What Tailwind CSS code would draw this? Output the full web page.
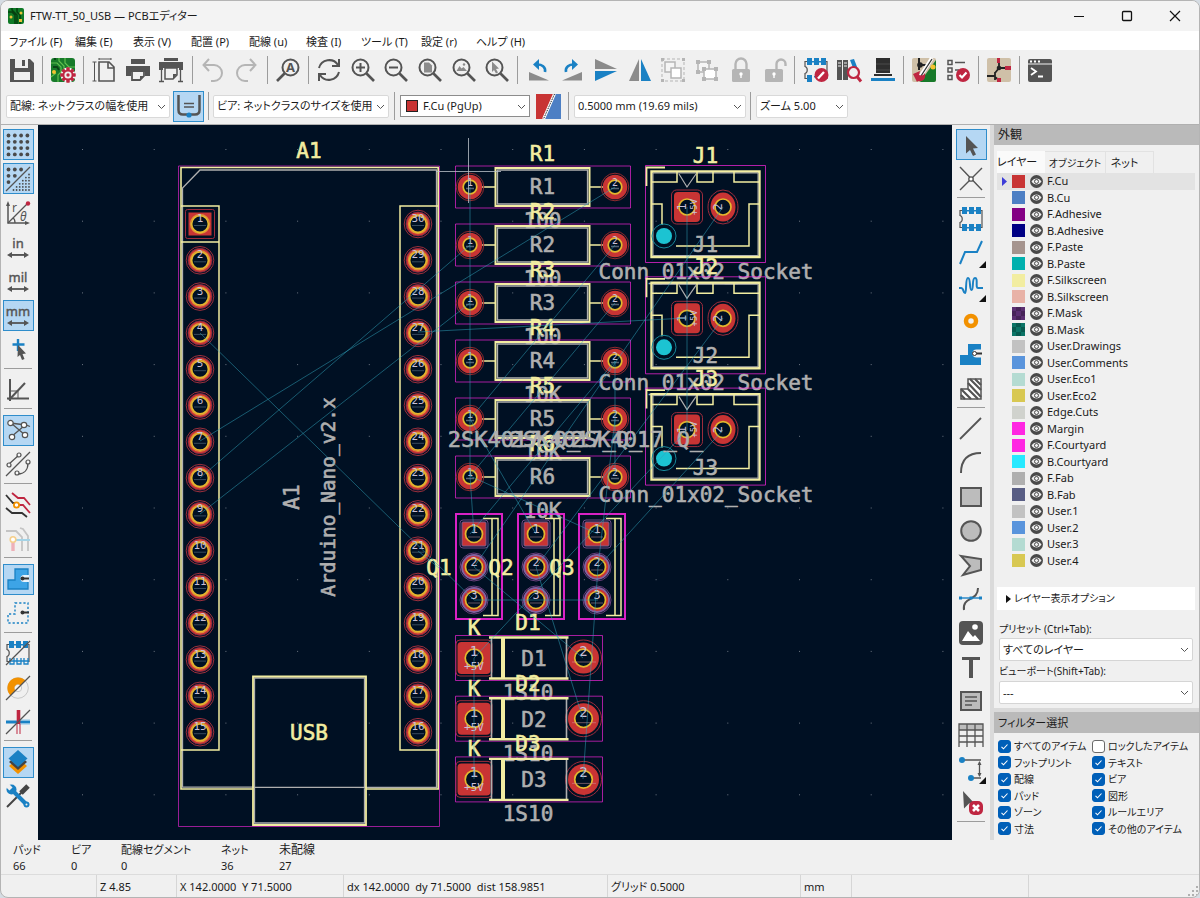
<!DOCTYPE html>
<html lang="ja">
  <head>
    <meta charset="UTF-8" />
    <meta name="viewport" content="width=device-width, initial-scale=1.0" />
    <title>FTW-TT_50_USB — PCBエディター</title>
    <script src="https://cdn.jsdelivr.net/npm/@tailwindcss/browser@4"></script>
  </head>
  <body class="bg-[#d5dce3]">
    <div
      class="flex flex-col h-screen overflow-hidden rounded-lg border border-[#b4b4b4] bg-[#f0f0f0] text-[12px] leading-4 text-[#1b1b1b] font-['Noto_Sans','Noto_Sans_CJK_JP',sans-serif] [font-feature-settings:'palt']"
    >
      <!-- title bar -->
      <header class="flex items-center h-[30px] shrink-0 bg-[#f3f3f3] pl-[7px]">
        <svg class="size-4" viewBox="0 0 16 16">
          <rect width="16" height="16" rx="2" fill="#0f7a26" />
          <path d="M0 4h4l3 3v9M4 0v2l5 5v9M9 0l0 4 3 3v9" fill="none" stroke="#05400f" stroke-width="1.5" />
          <circle cx="3" cy="9" r="1.5" fill="#e8c13a" />
          <circle cx="13" cy="5" r="1.5" fill="#e8c13a" />
          <rect x="11" y="11" width="3" height="3" fill="#e8c13a" />
        </svg>
        <h1 class="ml-[6px] text-[11px]">FTW-TT_50_USB — PCBエディター</h1>
        <div class="ml-auto flex">
          <button aria-label="最小化" class="grid place-items-center w-12 h-[30px]">
            <svg class="size-3" viewBox="0 0 12 12"><path d="M1 6.5h10" stroke="#111" /></svg>
          </button>
          <button aria-label="最大化" class="grid place-items-center w-12 h-[30px]">
            <svg class="size-3" viewBox="0 0 12 12"><rect x="1.5" y="1.5" width="9" height="9" rx="1" fill="none" stroke="#111" stroke-width="1.3" /></svg>
          </button>
          <button aria-label="閉じる" class="grid place-items-center w-12 h-[30px]">
            <svg class="size-3" viewBox="0 0 12 12"><path d="M1 1l10 10M11 1L1 11" stroke="#111" stroke-width="1.2" /></svg>
          </button>
        </div>
      </header>

      <!-- menu -->
      <nav class="grid grid-cols-[66px_58px_58px_58px_57px_55px_60px_55px_auto] items-center justify-start h-[19px] shrink-0 bg-white pl-2 pt-[2px] text-[11px]">
        <a href="#">ファイル (F)</a>
        <a href="#">編集 (E)</a>
        <a href="#">表示 (V)</a>
        <a href="#">配置 (P)</a>
        <a href="#">配線 (u)</a>
        <a href="#">検査 (I)</a>
        <a href="#">ツール (T)</a>
        <a href="#">設定 (r)</a>
        <a href="#">ヘルプ (H)</a>
      </nav>

      <!-- main toolbar -->
      <div class="h-10 shrink-0 pl-[5px]">
        <div id="topbar" class="flex items-center justify-between w-[1050px] h-10"></div>
      </div>

      <!-- track / via / layer / grid / zoom -->
      <div class="flex items-center h-[34px] shrink-0 pl-[5px] pb-[2px] text-[11px]">
        <div class="relative">
          <select aria-label="配線幅" class="appearance-none w-[164px] h-[23px] pl-[3px] bg-white border border-[#d9d9d9] rounded-[2px]">
            <option>配線: ネットクラスの幅を使用</option>
          </select>
          <svg class="absolute right-1 top-[7px] size-[9px] pointer-events-none" viewBox="0 0 9 9"><path d="M1 3l3.500 3.500L8 3" fill="none" stroke="#555" /></svg>
        </div>
        <button aria-label="既存配線の幅を使用" class="grid place-items-center size-[31px] ml-[3px] border border-[#2f8dcb] bg-[#b5d7f3]">
          <svg class="size-6" viewBox="0 0 24 24">
            <path d="M1.500 1v15c0 3 1.500 4.500 4.500 4.500h12c3 0 4.500-1.500 4.500-4.500V1" fill="none" stroke="#545454" stroke-width="2.500" />
            <path d="M7 9.500h10M7 13h10" stroke="#545454" stroke-width="1.300" />
            <circle cx="12" cy="21" r="2.600" fill="#1a81c4" />
          </svg>
        </button>
        <i class="w-px h-7 mx-1 bg-[#9c9c9c]"></i>
        <div class="relative">
          <select aria-label="ビアサイズ" class="appearance-none w-[176px] h-[23px] pl-[3px] bg-white border border-[#d9d9d9] rounded-[2px]">
            <option>ビア: ネットクラスのサイズを使用</option>
          </select>
          <svg class="absolute right-1 top-[7px] size-[9px] pointer-events-none" viewBox="0 0 9 9"><path d="M1 3l3.500 3.500L8 3" fill="none" stroke="#555" /></svg>
        </div>
        <i class="w-px h-7 mx-[5px] bg-[#9c9c9c]"></i>
        <div class="relative">
          <select aria-label="レイヤー" class="appearance-none w-[130px] h-[22px] pl-[22px] bg-white border border-[#8c8c8c]">
            <option>F.Cu (PgUp)</option>
          </select>
          <span class="absolute left-[6px] top-[5px] size-3 bg-[#c83434] border border-[#222] pointer-events-none"></span>
          <svg class="absolute right-1 top-[7px] size-[9px] pointer-events-none" viewBox="0 0 9 9"><path d="M1 3l3.500 3.500L8 3" fill="none" stroke="#555" /></svg>
        </div>
        <button aria-label="レイヤーペア" class="ml-[6px]">
          <svg class="size-[25px]" viewBox="0 0 25 25">
            <rect width="25" height="25" fill="#4d7fc4" />
            <path d="M0 0h18L7 25H0z" fill="#c83434" />
            <path d="M18.500 0l-11 25" stroke="#fff" stroke-width="3" />
            <path d="M18.500 0l-11 25" stroke="#222" stroke-width="1" stroke-dasharray="1.500 1" />
          </svg>
        </button>
        <i class="w-px h-7 ml-[7px] mr-[5px] bg-[#9c9c9c]"></i>
        <div class="relative">
          <select aria-label="グリッド" class="appearance-none w-[172px] h-[23px] pl-[3px] bg-white border border-[#d9d9d9] rounded-[2px]">
            <option>0.5000 mm (19.69 mils)</option>
          </select>
          <svg class="absolute right-1 top-[7px] size-[9px] pointer-events-none" viewBox="0 0 9 9"><path d="M1 3l3.500 3.500L8 3" fill="none" stroke="#555" /></svg>
        </div>
        <i class="w-px h-7 ml-1 mr-[5px] bg-[#9c9c9c]"></i>
        <div class="relative">
          <select aria-label="ズーム" class="appearance-none w-[92px] h-[23px] pl-[3px] bg-white border border-[#d9d9d9] rounded-[2px]">
            <option>ズーム 5.00</option>
          </select>
          <svg class="absolute right-1 top-[7px] size-[9px] pointer-events-none" viewBox="0 0 9 9"><path d="M1 3l3.500 3.500L8 3" fill="none" stroke="#555" /></svg>
        </div>
      </div>

      <main class="flex flex-1 min-h-0 border-t border-[#b0b0b0]">
        <div id="leftbar" class="flex flex-col items-center justify-between w-[37px] h-[687px] shrink-0 pt-1 pr-[3px]"></div>

        <!-- board canvas -->
        <svg id="board" class="flex-1 min-w-0 h-full bg-[#001023] font-['DejaVu_Sans_Mono',monospace] text-[21px]"></svg>

        <div id="rightbar" class="flex flex-col items-center gap-[3px] w-[38px] shrink-0 pt-1"></div>

        <!-- appearance panel -->
        <aside class="flex flex-col w-[209px] shrink-0 border-l-4 border-[#dadada] text-[11px]">
          <h2 class="h-5 shrink-0 pl-1 leading-5 bg-[#bababa] text-[12px]">外観</h2>
          <div role="tablist" class="flex items-end h-7 shrink-0 pl-[3px]">
            <button role="tab" class="h-[22px] w-12 pr-2 bg-[#fafafa] whitespace-nowrap">レイヤー</button>
            <button role="tab" class="h-[22px] w-[61px] text-[10px] border-t border-r border-[#e2e2e2] whitespace-nowrap">オブジェクト</button>
            <button role="tab" class="h-[22px] w-12 pr-[10px] border-t border-r border-[#e2e2e2]">ネット</button>
          </div>
          <ul id="layers" class="grid auto-rows-fr h-[396px] shrink-0 ml-[3px] mr-1"></ul>
          <details class="mt-[18px] ml-[3px] mr-1 pl-[9px] h-[23px] shrink-0 bg-white leading-[23px] text-[10px]">
            <summary class="list-none flex items-center gap-[3px]">
              <svg class="w-[5px] h-2" viewBox="0 0 5 8"><path d="M0 0l5 4-5 4z" fill="#111" /></svg>レイヤー表示オプション
            </summary>
          </details>
          <div class="flex flex-col pl-[5px] pr-[6px] pt-[11px]">
            <label for="preset" class="text-[10px]">プリセット (Ctrl+Tab):</label>
            <div class="relative mt-px">
              <select id="preset" class="appearance-none w-full h-[23px] pl-[3px] bg-white border border-[#d5d5d5] rounded-[2px]">
                <option>すべてのレイヤー</option>
              </select>
              <svg class="absolute right-1 top-[7px] size-[9px] pointer-events-none" viewBox="0 0 9 9"><path d="M1 3l3.500 3.500L8 3" fill="none" stroke="#555" /></svg>
            </div>
            <label for="viewport" class="mt-[2px] text-[10px]">ビューポート(Shift+Tab):</label>
            <div class="relative mt-[2px]">
              <select id="viewport" class="appearance-none w-full h-[23px] pl-[3px] bg-white border border-[#d5d5d5] rounded-[2px]">
                <option>---</option>
              </select>
              <svg class="absolute right-1 top-[7px] size-[9px] pointer-events-none" viewBox="0 0 9 9"><path d="M1 3l3.500 3.500L8 3" fill="none" stroke="#555" /></svg>
            </div>
          </div>
          <h2 class="h-[25px] shrink-0 mt-1 pl-1 leading-[21px] bg-[#bababa] border-t-4 border-[#dadada] text-[11px]">フィルター選択</h2>
          <div id="filters" class="grid grid-cols-[94px_1fr] auto-rows-fr h-[99px] shrink-0 mt-[5px] pl-1 text-[10px]"></div>
        </aside>
      </main>

      <!-- message panel -->
      <dl class="flex h-[34px] shrink-0 pl-3 pt-[2px] text-[11px]">
        <div class="w-[58px]"><dt>パッド</dt><dd>66</dd></div>
        <div class="w-[50px]"><dt>ビア</dt><dd>0</dd></div>
        <div class="w-[100px]"><dt>配線セグメント</dt><dd>0</dd></div>
        <div class="w-[58px]"><dt>ネット</dt><dd>36</dd></div>
        <div><dt class="text-[12px]">未配線</dt><dd>27</dd></div>
      </dl>

      <footer class="relative flex h-[23px] shrink-0 border-t border-[#dcdcdc] text-[11px] leading-[23px] whitespace-pre">
        <span class="w-24 border-r border-[#d6d6d6]"></span>
        <span class="w-[80px] pl-[3px] border-r border-[#d6d6d6]">Z 4.85</span>
        <span class="w-[167px] pl-[3px] border-r border-[#d6d6d6]">X 142.0000  Y 71.5000</span>
        <span class="w-[264px] pl-[3px] border-r border-[#d6d6d6]">dx 142.0000  dy 71.5000  dist 158.9851</span>
        <span class="w-[193px] pl-[3px] border-r border-[#d6d6d6]">グリッド 0.5000</span>
        <span class="w-[51px] pl-[3px] border-r border-[#d6d6d6]">mm</span>
        <span class="w-[177px] border-r border-[#d6d6d6]"></span>
        <svg class="absolute right-px bottom-px size-[10px]" viewBox="0 0 10 10" fill="#b0b0b0">
          <path d="M8 0h2v2H8zM8 4h2v2H8zM8 8h2v2H8zM4 4h2v2H4zM4 8h2v2H4zM0 8h2v2H0z" />
        </svg>
      </footer>
    </div>

    <script>
      const G = "#545454", B = "#1a81c4", R = "#bf2641", O = "#f29100", L = "#b5b5b5";
      const line = (d, c = G, w = 1.5, extra = "") =>
        `<path d="${d}" fill="none" stroke="${c}" stroke-width="${w}" ${extra}/>`;
      const fill = (d, c = G) => `<path d="${d}" fill="${c}"/>`;
      const lens = `<circle cx="9.500" cy="9.500" r="8" fill="none" stroke="${G}" stroke-width="2"/>` + line("M15.500 15.500l7.500 7.500", G, 2.6);
      const arrow = line("M4 20h16", G, 1.8) + fill("M1 20l5-3v6zM23 20l-5-3v6z");
      const slash = line("M0 24L24 0", G, 1.3);
      const unit = (t) => `<text x="12" y="13" text-anchor="middle" font-size="13" fill="${G}" stroke="${G}" stroke-width="0.4">${t}</text>` + arrow;
      const dots = (n, x0, y0, step, r, test) => {
        let s = "";
        for (let i = 0; i < n; i++)
          for (let j = 0; j < n; j++)
            if (!test || test(i, j)) s += `<circle cx="${x0 + i * step}" cy="${y0 + j * step}" r="${r}"/>`;
        return `<g fill="#4a4a4a">${s}</g>`;
      };
      const chip = (bottom) =>
        line("M3 3.500H1v5c3 1 3 6 0 7v5h2M22 3.500h1v17h-1", G, 1.2) +
        fill("M3 0h5v7H3zM10 0h5v7h-5zM17 0h5v7h-5zM3 3h18v1.500H3z", B) +
        bottom;
      const padlock = (d) =>
        line(d, L, 2.4) + `<rect x="3" y="11" width="18" height="13" rx="1.500" fill="${L}"/>` +
        `<circle cx="12" cy="16" r="1.700" fill="#fff"/>` + fill("M11.300 16h1.400v4h-1.400z", "#fff");
      const corner = fill("M27 27v-7l-7 7z", "#111");
      const sch = `<rect width="24" height="24" rx="2" fill="#cfc0a8"/>`;
      const gear = Array.from({ length: 8 }, (_, i) => `<rect x="15.500" y="9.500" width="3" height="15" fill="${R}" transform="rotate(${i * 45} 17 17)"/>`).join("");

      const icons = {
        save: fill("M0 1h20l4 4v19H0z") + fill("M5 1h13v9H5z", "#efefef") + fill("M12 2h3v6h-3z") + fill("M4 14h16v8H4z", "#efefef"),
        setup: `<rect width="24" height="24" rx="3" fill="#177a2a"/>` + line("M0 5h6l4 4v5l-3 3v7M8 0v3l5 5v4M14 0v5l4 4h6M0 19l5-4", "#5fbf4f", 1.2) + line("M4 0v2M2 9h4l2 3", "#0a4516", 2) + `<circle cx="3" cy="14" r="2" fill="#f3c330"/><circle cx="17" cy="17" r="7.500" fill="#efefef"/>${gear}<circle cx="17" cy="17" r="5.300" fill="${R}"/><circle cx="17" cy="17" r="3.600" fill="#efefef"/><circle cx="17" cy="17" r="1.700" fill="${R}"/>`,
        page: line("M7 4h10l5 5v14H7zM16 4v6h6", G, 1.6) + line("M2.500 4v19M0.500 4h4M0.500 23h4M7 1h12M7 0v2M19 0v2", G, 1),
        print: fill("M5 1h14v5H5zM0 8h24v10h-5v-4H5v4H0z") + line("M6 13h12v5l-4 4H6z", G, 1.8) + fill("M14 22v-4h4z"),
        plot: fill("M5 0h14v3H5zM0 4h24v8h-4v-2H4v2H0z") + line("M6 10h12v7l-4 4H6z", G, 1.5) + fill("M14 21v-5h4z") + line("M2.500 12v11M21.500 12v11M0 23.500h5M19 23.500h5", G, 1.3),
        undo: line("M3 7h10a8 8 0 0 1 0 16H10M8 1L2.500 7 8 13", L, 2),
        redo: line("M21 7H11a8 8 0 0 0 0 16h3M16 1l5.500 6L16 13", L, 2),
        find: `<g transform="matrix(-1 0 0 1 24 0)">${lens}</g><text x="14.500" y="14" text-anchor="middle" font-size="13" font-weight="bold" fill="${G}">A</text>`,
        refresh: line("M2 10a10.500 10.500 0 0 1 19-3M22 1v7h-7M22 14a10.500 10.500 0 0 1-19 3M2 23v-7h7", G, 2),
        zoomin: lens + line("M9.500 5v9M5 9.500h9", G, 2),
        zoomout: lens + line("M5 9.500h9", G, 2),
        zoompage: lens + fill("M6 4.500h5l3 3v7H6z", "#8b8b8b"),
        zoomobj: lens + fill("M4.500 13l3-5 2 2.500 2-1.500 3.500 4z", "#8b8b8b") + `<circle cx="12" cy="6.500" r="1.200" fill="#8b8b8b"/>`,
        zoomsel: lens + fill("M7 3.500l7 7-3 .5 2 3.500-2 1-2-3.500-2 2z", "#8b8b8b"),
        rotl: fill("M2 14l20 8.500H2z", "#8b8b8b") + line("M18 14c1-5-3-8-9-7.500", B, 2.6) + fill("M6 6.500l6-5.500v11z", B),
        rotr: fill("M22 14L2 22.500h20z", "#8b8b8b") + line("M6 14c-1-5 3-8 9-7.500", B, 2.6) + fill("M18 6.500L12 1v11z", B),
        flipv: fill("M1 1v10h22z", "#8b8b8b") + fill("M1 23V13h22z", B),
        fliph: fill("M1 23h10V1z", "#8b8b8b") + fill("M23 23H13V1z", B),
        group: `<rect x="1" y="1" width="22" height="22" fill="none" stroke="${L}" stroke-dasharray="3 2"/><rect x="4" y="4" width="10" height="10" fill="#f5f5f5" stroke="${L}" stroke-width="1.500"/><rect x="10" y="10" width="10" height="10" fill="#fff" stroke="${L}" stroke-width="1.500"/>` + fill("M0 0h3v3H0zM21 0h3v3h-3zM0 21h3v3H0zM21 21h3v3h-3z", L),
        ungroup: `<rect x="3" y="4" width="11" height="10" fill="#f5f5f5" stroke="${L}" stroke-width="1.500"/><rect x="9" y="11" width="12" height="10" fill="#fff" stroke="${L}" stroke-width="1.500"/>` + fill("M1 2h4v4H1zM12 2h4v4h-4zM1 12h4v4H1zM7 9h4v4H7zM19 9h4v4h-4zM7 19h4v4H7zM19 19h4v4h-4z", L),
        lock: padlock("M6.500 11V6a5.500 5.500 0 0 1 11 0v5"),
        unlock: padlock("M14.500 11V6a4.500 4.500 0 0 1 9 0v2"),
        fpedit: chip(fill("M3 17h5v7H3zM10 18h5v1.500h-5z", B)) + `<circle cx="17.500" cy="17" r="7" fill="${R}"/>` + line("M14 20.500l6-6.500", "#fff", 2.4),
        library: fill("M0 2h5v20H0zM6 2h5v20H6z") + fill("M13 2l4-1 5 13-4 1z", B) + line("M1 5h3M1 8h3M7 5h3M7 8h3", "#eee", 1) + `<circle cx="16.500" cy="14.500" r="5.500" fill="#efefef" stroke="${R}" stroke-width="2.200"/>` + line("M20 18.500l4 5", R, 3),
        chip3d: fill("M5 0h14v15H5zM3 16h18v2H3z", "#2e2e2e") + line("M5 6h14M5 12h14", G, 0.8) + fill("M0 20h24v3H0z", B),
        update: sch + fill("M24 2L8 24h14a2 2 0 0 0 2-2z", "#177a2a") + line("M7 0v5M7 8v4M7 7h8", "#222", 2) + `<circle cx="8" cy="7" r="2.800" fill="#222"/><circle cx="21" cy="9" r="2.500" fill="#f3c330"/>` + line("M20 0L8 19", "#fff", 4) + line("M20 1L9 18", "#333", 1.3) + fill("M1 16l7-3-1 4c3 1 5 0 6-2 1 5-1 9-7 8l-1 1z", R),
        drc: line("M2 2.500h4v4H2zM2 10h4v4H2zM2 17.500h4v4H2zM9 4.500h10M9 12h4", G, 1.5) + `<circle cx="17" cy="17" r="7" fill="${R}"/>` + line("M13.500 17l2.500 2.500 4.500-5", "#fff", 2.2),
        schematic: sch + line("M12 0v10M12 10h12M12 10L8 15M0 18h8M8 14v8M8 19l5 4", "#222", 1.8) + fill("M10 0h3v5h-3zM18 8h6v4h-6zM10 20h4v4h-4z", R) + `<circle cx="12" cy="10" r="2.300" fill="#222"/>`,
        console: `<rect y="1" width="24" height="23" rx="2" fill="${G}"/>` + line("M0 6h24", "#efefef", 1.2) + line("M2 3.500h2M6 3.500h2M10 3.500h2", "#fff", 1.8) + line("M3 10l5 3.500L3 17M10 18.500h5", "#fff", 1.8),

        grid: dots(4, 2.5, 2.5, 6.3, 1.9),
        gridov: dots(3, 2.5, 2.5, 6.3, 1.9, (i, j) => i + j < 3) + dots(6, 7.5, 7.5, 3.1, 0.9, (i, j) => i + j > 4) + line("M0 24L24 0", G, 1.3),
        polar: line("M2 3v19h19", G, 1.5) + fill("M2 0l2 5H0zM24 22l-5-2v4z") + line("M2 22L21 3M7 17c2 1 2 3 2 5", G, 1.3) + `<circle cx="22" cy="2.500" r="2.200" fill="${R}"/><text x="6" y="11" font-size="12" fill="${G}">r</text><text x="14" y="20" font-size="12" font-style="italic" fill="${G}">θ</text>`,
        inch: unit("in"), mil: unit("mil"), mm: unit("mm"),
        cursor: line("M12 2v12M6.500 7.500h12", B, 2.4) + fill("M12 8l8 8.500-3.500.5 2 5-2.500 1-2-5-2.500 2z"),
        angle: line("M4 1v22M1 20.500h22", G, 2) + line("M3 22L19 5", G, 2) + line("M5 13h7v7", G, 1),
        ratsnest: line("M4 5l16 2 4 1.500M5 19L18 8M5 5l14 12", G, 1.3) + `<g fill="#fff" stroke="${G}" stroke-width="1.200"><circle cx="4.500" cy="5" r="2.700"/><circle cx="18" cy="7" r="2.700"/><circle cx="6" cy="19" r="2.700"/><circle cx="19" cy="17" r="2.700"/></g>`,
        curved: line("M0 24L24 0M3 12L13 3M12 22c6 0 10-4 10-11", G, 1.3) + `<g fill="#f5f5f5" stroke="${G}" stroke-width="1.200"><circle cx="3" cy="13" r="2"/><circle cx="13" cy="3" r="2"/><circle cx="11" cy="21" r="2"/><circle cx="22" cy="10" r="2"/></g>`,
        highlight: line("M0 2l7 8h4M0 15l6 5h10l5 4", "#333", 1.8) + line("M6 0l6 5h6l6 7M12 12h5l7 8", R, 1.8) + `<circle cx="10.500" cy="12" r="2.600" fill="#fff" stroke="${O}" stroke-width="1.800"/>`,
        contrast: line("M0 4h10l6 6v14M14 1l3 1 5 7v15", "#c4c4c4", 1.8) + line("M9 13h15", "#a4d3e6", 2) + line("M7 15v9", "#eeb0b8", 3.4) + `<circle cx="7" cy="12.500" r="2.800" fill="#fff" stroke="#f5cf8b" stroke-width="1.600"/>`,
        zonefill: `<path d="M9 2h13v20H2V13h7z" fill="#3da4e6" stroke="${B}" stroke-width="1.300"/><path d="M23 8h-5a3.500 3.500 0 0 0 0 7h5z" fill="#e8f3fb"/><circle cx="16.500" cy="11.500" r="2" fill="#333"/>` + line("M16 11.500h7", "#333", 2),
        zoneline: `<path d="M9 2h13v20H2V13h7z" fill="none" stroke="${B}" stroke-width="1.400" stroke-dasharray="2.200 2"/><circle cx="16.500" cy="11.500" r="2" fill="#333"/>` + line("M16 11.500h7", "#333", 2),
        fppads: chip(line("M4 17v6h4v-6M11 17v6h4v-6M18 17v6h4v-6M3 20h20", B, 1.3)) + slash,
        viaout: `<circle cx="12" cy="12" r="10.300" fill="none" stroke="#c8c8c8"/><circle cx="12" cy="12" r="3.700" fill="#f5f5f5" stroke="#c8c8c8"/>` + fill("M19.500 4.500A10.600 10.600 0 0 0 4.500 19.500L9.500 14.500A3.500 3.500 0 0 1 14.500 9.500z", O) + slash,
        tracks: line("M0 12h24", B, 3) + line("M13 10h11M13 14h11", "#8cc4e6", 1) + line("M12.500 0v14", R, 3.6) + line("M11 14v10M14 14v10", R, 1) + slash,
        layers: fill("M12 24L3 16l9-8 9 8z", O) + fill("M12 20L3 12l9-8 9 8z", "#444") + fill("M12 17L2.500 8.500 12 0l9.500 8.500z", B),
        tools: line("M1 23L16 8", "#444", 2) + line("M15 9l7-7", "#444", 5) + line("M7 7l13 13", B, 4) + `<circle cx="5.500" cy="5.500" r="5" fill="${B}"/><circle cx="20.500" cy="20.500" r="3" fill="${B}"/><circle cx="20.500" cy="20.500" r="1" fill="#efefef"/>` + line("M0 0l5 5", "#efefef", 4.5),

        select: fill("M7 3l12 12-5 .5 3 6-3 1.500-3-6-4 3.500z"),
        local: line("M1 0l22 23M23 1L1 23", G, 1.4) + `<circle cx="12" cy="12" r="2.200" fill="#fff" stroke="${G}" stroke-width="1.300"/>`,
        footprint: chip(fill("M3 17h5v7H3zM10 17h5v7h-5zM17 17h5v7h-5zM3 20h18v1.500H3z", B)),
        route: line("M1 23l5-12h12L23 0", B, 2) + corner,
        tune: line("M0 13h2c3 0 2 5 4 5s0-15 3-15 1 12 3.500 12 0-12 3.500-12 0 10 3 10h5", B, 2) + corner,
        via: `<circle cx="12" cy="12" r="5" fill="none" stroke="${O}" stroke-width="4.500"/>`,
        zone: fill("M9 1h13v21H1V12h8z", B) + fill("M23 6.500h-5.500a4 4 0 0 0 0 8H23z", "#f0f0f0") + line("M15 10.500h8", "#333", 2) + `<circle cx="15.500" cy="10.500" r="2" fill="#fff" stroke="#333"/>`,
        rulearea: `<path d="M9 2h13v20H2V12h7z" fill="#fff" stroke="${G}" stroke-width="1.500"/>` + line("M2 12l10 10M9 12l10 10M9 6l13 14M11 2l11 11M16 2l6 6M2 18l4 4", G, 2.2),
        line: line("M1 22L22 1", G, 1.8),
        arc: line("M2 22C2 10 8 2 22 2", G, 2),
        rect: `<rect x="2" y="3" width="20" height="18" fill="#bcbcbc" stroke="${G}" stroke-width="2"/>`,
        circle: `<circle cx="12" cy="12" r="9.800" fill="#bcbcbc" stroke="${G}" stroke-width="2"/>`,
        poly: `<path d="M2 3l20 3v11L4 22l7-9z" fill="#bcbcbc" stroke="${G}" stroke-width="2"/>`,
        bezier: line("M5 23c-2-14 14-8 14-22", G, 2) + line("M1 11h22", B, 1.4) + fill("M0 9.500h3v3H0zM20 9.500h3v3h-3zM10.500 9.500h3v3h-3z", B),
        image: `<rect x="0" y="0" width="24" height="24" rx="4" fill="${G}"/>` + fill("M3 20l6-10 5 6 2-2 5 6z", "#fff") + `<circle cx="16" cy="6" r="2.800" fill="#fff"/>`,
        text: fill("M3 2h18v3h-7v18h-4V5H3z"),
        textbox: `<rect x="2" y="3" width="20" height="18" fill="#bcbcbc" stroke="${G}" stroke-width="2"/>` + line("M6 8h12M6 12h12M6 16h7", G, 1.6),
        table: `<rect x="0" y="1" width="24" height="6" fill="#bcbcbc"/>` + line("M0 24V1h24v23M0 7h24M0 13h24M0 19h24M8 1v23M16 1v23", G, 1.3),
        dim: line("M2 3h20M12 21h10M20.500 5v14", G, 1.3) + fill("M20.500 4l2 4h-4zM20.500 20l2-4h-4z") + `<circle cx="3" cy="3" r="3" fill="${B}"/><circle cx="12" cy="21" r="3" fill="${B}"/>` + corner,
        del: fill("M4 0l11 12-5 .5-5 5z") + `<rect x="10" y="10" width="14" height="14" rx="5" fill="${R}"/>` + line("M14 14l6 6M20 14l-6 6", "#fff", 2.6),
      };

      const plain = "grid place-items-center size-[31px] shrink-0";
      const active = "grid place-items-center size-[31px] shrink-0 border border-[#2f8dcb] bg-[#b5d7f3]";
      function fillBar(id, names, sep) {
        document.getElementById(id).innerHTML = names
          .split(" ")
          .map((n) => {
            if (n === "|") return sep;
            const on = n[0] === "*";
            if (on) n = n.slice(1);
            return `<button aria-label="${n}" class="${on ? active : plain}"><svg class="size-6 overflow-visible" viewBox="0 0 24 24">${icons[n]}</svg></button>`;
          })
          .join("");
      }
      const vsep = '<i class="flex justify-center w-[5px] h-7 shrink-0"><b class="w-px bg-[#9c9c9c]"></b></i>';
      const hsep = '<i class="w-7 h-[3px] shrink-0 border-t border-[#9c9c9c]"></i>';
      fillBar("topbar", "save | setup | page print plot | undo redo | find | refresh zoomin zoomout zoompage zoomobj zoomsel | rotl rotr flipv fliph group ungroup lock unlock | fpedit library chip3d | update drc | schematic | console", vsep);
      fillBar("leftbar", "*grid *gridov polar inch mil *mm cursor | angle | *ratsnest curved | highlight contrast | *zonefill zoneline | fppads viaout tracks | *layers tools", hsep);
      fillBar("rightbar", "*select local | footprint route tune via zone rulearea | line arc rect circle poly bezier image text textbox table dim del |", hsep);

      // layer list
      const layers = [
        ["F.Cu", "#c83434"], ["B.Cu", "#4d7fc4"], ["F.Adhesive", "#840084"], ["B.Adhesive", "#000084"],
        ["F.Paste", "#a5948e"], ["B.Paste", "#00b0ae"], ["F.Silkscreen", "#f2eda1"], ["B.Silkscreen", "#e8b2a7"],
        ["F.Mask", "#5b2f72"], ["B.Mask", "#0a7466"], ["User.Drawings", "#c2c2c2"], ["User.Comments", "#5994dc"],
        ["User.Eco1", "#b4dbd2"], ["User.Eco2", "#d8c852"], ["Edge.Cuts", "#d0d2cd"], ["Margin", "#ff26e2"],
        ["F.Courtyard", "#ff26e2"], ["B.Courtyard", "#26e9ff"], ["F.Fab", "#afafaf"], ["B.Fab", "#585d84"],
        ["User.1", "#c2c2c2"], ["User.2", "#5994dc"], ["User.3", "#b4dbd2"], ["User.4", "#d8c852"],
      ];
      document.getElementById("layers").innerHTML = layers
        .map(([name, color], i) => {
          const mask = name.endsWith("Mask") ? '<path d="M4 0h5v4H4zM9 4h4v5H9zM0 4h4v5H0zM4 9h5v4H4z" fill="#000" opacity=".22"/>' : "";
          return `<li class="${i ? "flex items-center" : "flex items-center bg-[#e3e3e3]"}">
            <svg class="w-[5px] h-[9px] ml-[5px] mr-[5px]" viewBox="0 0 5 9">${i ? "" : '<path d="M0 0l5 4.500L0 9z" fill="#3c3cd8"/>'}</svg>
            <svg class="size-[13px]" viewBox="0 0 13 13"><rect width="13" height="13" fill="${color}"/>${mask}</svg>
            <button aria-label="${name} 表示" class="ml-[5px] mr-1"><svg class="size-[13px]" viewBox="0 0 13 13"><circle cx="6.500" cy="6.500" r="6.500" fill="#4a4a4a"/><path d="M1.500 6.500c2.500-4 7.500-4 10 0-2.500 4-7.500 4-10 0z" fill="#eee"/><circle cx="6.500" cy="6.500" r="2" fill="#eee" stroke="#4a4a4a"/></svg></button>
            ${name}</li>`;
        })
        .join("");

      const filters = ["すべてのアイテム", "ロックしたアイテム", "フットプリント", "テキスト", "配線", "ビア", "パッド", "図形", "ゾーン", "ルールエリア", "寸法", "その他のアイテム"];
      document.getElementById("filters").innerHTML = filters
        .map((name, i) => `<label class="flex items-center gap-[3px] whitespace-nowrap">
          <span class="grid"><input type="checkbox" ${i === 1 ? "" : "checked"} class="[grid-area:1/1] appearance-none size-[13px] rounded-[3px] border border-[#6a6a6a] bg-white checked:border-[#005fb8] checked:bg-[#005fb8]" />
          <svg class="[grid-area:1/1] size-[13px] pointer-events-none" viewBox="0 0 13 13"><path d="M3.500 6.800l2 2 4-4.300" fill="none" stroke="#fff" stroke-width="1.100"/></svg></span>${name}</label>`)
        .join("");

      // board, drawn in window coordinates and shifted to the canvas corner
      const SILK = "#f2eda1", FAB = "#afafaf", RED = "#c83434", CRT = "#ff26e2", BG = "#001023", HOLE = "#e3b72e";
      const out = [];
      const put = (s) => out.push(s);
      const ln = (d, c, w = 1.5, o = 1) => put(`<path d="${d}" fill="none" stroke="${c}" stroke-width="${w}" opacity="${o}"/>`);
      const box = (x, y, w, h, c, sw = 1, o = 1) => ln(`M${x} ${y}h${w}v${h}h${-w}z`, c, sw, o);
      const txt = (x, y, s, c, extra = "") => put(`<text x="${x}" y="${y}" text-anchor="middle" fill="${c}" stroke="${c}" stroke-width="0.600" ${extra}>${s}</text>`);
      const small = (x, y, s, size, extra = "") => put(`<text x="${x}" y="${y}" text-anchor="middle" fill="#c9bfd6" font-size="${size}" ${extra}>${s}</text>`);
      const ring = (x, y, r, c, w = 1) => put(`<circle cx="${x}" cy="${y}" r="${r}" fill="none" stroke="${c}" stroke-width="${w}"/>`);
      const disc = (x, y, r, c) => put(`<circle cx="${x}" cy="${y}" r="${r}" fill="${c}"/>`);
      const hole = (x, y, r) => put(`<circle cx="${x}" cy="${y}" r="${r}" fill="${BG}" stroke="${HOLE}" stroke-width="1.700"/>`);
      const pad = (x, y, w, h, rx, c = RED) => put(`<rect x="${x - w / 2}" y="${y - h / 2}" width="${w}" height="${h}" rx="${rx}" fill="${c}"/>`);
      const padLine = (x, y, w, h, rx, c = "#9c2c3c") => put(`<rect x="${x - w / 2}" y="${y - h / 2}" width="${w}" height="${h}" rx="${rx}" fill="none" stroke="${c}"/>`);

      put(`<defs><pattern id="dots" x="82" y="149" width="71.700" height="71.700" patternUnits="userSpaceOnUse"><rect width="1" height="1" fill="#6b7480"/></pattern></defs>`);
      put(`<rect x="38" y="125" width="4000" height="4000" fill="url(#dots)"/>`);

      // A1
      box(178.5, 166, 261, 660.5, CRT, 1, 0.6);
      ln("M182.500 787V188L200 170H436.500V787.500zM254.500 678h110v145h-110z", FAB, 1.3);
      ln("M181 206V167.500H438.200V789H366M252.500 789H181V206", SILK, 1.6);
      ln("M181 206h38v544h-38M181 242h38M438 206h-38v544h38", SILK, 1.5);
      box(253, 676.5, 113, 148.5, SILK, 1.8);
      txt(309, 158, "A1", SILK);
      txt(309, 740, "USB", SILK);
      txt(0, 0, "A1", FAB, 'transform="translate(299 497) rotate(-90)"');
      txt(0, 0, "Arduino_Nano_v2.x", FAB, 'font-size="19.500" transform="translate(335 497) rotate(-90)"');
      for (let i = 0; i < 15; i++) {
        const y = 224 + i * 36.3;
        for (const [x, n] of [[200, i + 1], [418, 30 - i]]) {
          if (n === 1) {
            padLine(x, y, 29, 29, 2);
            pad(x, y, 23, 23, 0);
          } else {
            ring(x, y, 13.8, "#9c2f3c");
            disc(x, y, 12, RED);
            ring(x, y, 12, "#7a2a4a", 0.8);
          }
          ring(x, y, 9.6, "#e08a3a", 1.2);
          hole(x, y, 8.4);
          small(x, y - 2, n, 11);
          ln(`M${x - 6} ${y + 1.5}h12`, "#4f6475", 1, 0.7);
        }
      }

      // resistors
      ["100", "100", "100", "10K", "10K", "10K"].forEach((v, i) => {
        const y = 187 + i * 58;
        box(455.5, y - 21, 175, 42, CRT, 1, 0.65);
        ln(`M482 ${y}h13M590 ${y}h13`, SILK, 1.5);
        box(495.5, y - 19, 94, 38, SILK, 2);
        box(497.5, y - 17, 90, 34, FAB, 1.3);
        [470, 615].forEach((x, k) => {
          ring(x, y, 13.8, "#8f2a2e");
          disc(x, y, 12.3, RED);
          hole(x, y, 6.8);
          small(x, y - 1, k + 1, 10);
          ln(`M${x - 4} ${y + 1.5}h8`, "#7c8797", 1.5, 0.7);
        });
        txt(542.5, y + 7, "R" + (i + 1), FAB);
        txt(542.5, y + 41, v, FAB);
        txt(542.5, y - 26, "R" + (i + 1), SILK);
      });

      // sockets
      for (let i = 0; i < 3; i++) {
        const dy = i * 111.3;
        put(`<g transform="translate(0 ${dy})">`);
        box(645.5, 165.5, 120, 97, CRT, 1, 0.7);
        box(651.5, 171.5, 108, 85.5, SILK, 2.4);
        box(653, 173, 105, 82.5, FAB, 1);
        ln("M646.500 186V167.500H665", SILK, 1.8);
        ln("M652 182h25v-10M697 172v10h16v-10M734 172v10h25M652 204h10v21M759 204h-10v42h-73", SILK, 1.5);
        ln("M679 174l8 13 9-13", FAB, 1.2);
        padLine(687, 207, 31, 34, 5);
        pad(687, 207, 26, 30, 4);
        put(`<ellipse cx="723" cy="207" rx="12.500" ry="14.500" fill="${RED}"/><ellipse cx="723" cy="207" rx="15" ry="17" fill="none" stroke="#9c2c3c"/>`);
        hole(687, 207, 8);
        hole(723, 207, 8);
        small(0, 0, "1", 12, 'transform="translate(686 207) rotate(-90)"');
        small(0, 0, "2", 12, 'transform="translate(722 207) rotate(-90)"');
        small(0, 0, "+5V", 9, 'transform="translate(697 207) rotate(-90)"');
        disc(664, 236, 8, "#1cc3d2");
        ring(664, 236, 12, "#17889a");
        txt(705.5, 252, "J" + (i + 1), FAB);
        txt(706, 279, "Conn_01x02_Socket", FAB);
        txt(705.5, 163, "J" + (i + 1), SILK);
        put("</g>");
      }

      // transistors
      [474, 536, 597].forEach((x, i) => {
        txt(x + 40, 447, "2SK4017_Q_", FAB, 'font-size="22"');
        box(x - 18, 514, 46, 105, CRT, 2, 0.85);
        ln(`M${x + 9} 518.500h15v97h-15M${x + 18} 518v97`, SILK, 1.5);
        [534, 567, 600].forEach((y, k) => {
          if (k === 0) {
            padLine(x, y, 28, 28, 3, "#6a4a86");
            pad(x, y, 24, 24, 1);
            padLine(x, y, 24, 24, 1, "#7d5b93");
          } else {
            ring(x, y, 14, "#6a3f7c");
            disc(x, y, 12, RED);
            ring(x, y, 12, "#8560a0", 1.8);
          }
          hole(x, y, 8.5);
          small(x, y - 1, k + 1, 12);
          ln(`M${x - 6} ${y + 3}h12`, "#8a6f7c", 1, 0.7);
        });
        txt(x - 35, 575, "Q" + (i + 1), SILK);
      });

      // diodes
      for (let i = 0; i < 3; i++) {
        const y = 658 + i * 60.7;
        box(455.5, y - 22.5, 147, 45, CRT, 1, 0.65);
        padLine(474, y, 36, 36, 4);
        pad(474, y, 33, 32, 4);
        ring(583.5, y, 18, "#9c2c3c");
        disc(583.5, y, 15.5, RED);
        ln(`M491.500 ${y - 20}v40M566.500 ${y - 20}v40`, FAB, 1.6);
        ln(`M489 ${y - 20.5}h79.500M489 ${y + 20.5}h79.500`, SILK, 2.4);
        ln(`M503 ${y - 20}v40`, SILK, 4);
        hole(474, y, 8.8);
        hole(583.5, y, 8.8);
        small(474, y - 2, 1, 14);
        small(474, y + 12, "+5V", 11);
        small(583.5, y - 2, 2, 14);
        ln(`M572 ${y + 4}h24`, "#d49a9a", 1, 0.5);
        txt(534, y + 8, "D" + (i + 1), FAB);
        txt(528, y + 42, "1S10", FAB);
        txt(474, y - 23, "K", SILK);
        txt(528, y - 28, "D" + (i + 1), SILK);
      }

      // ratsnest
      const nets = [
        [200, 333, 474, 600], [200, 441, 615, 187], [200, 478, 470, 245], [200, 514, 470, 303], [418, 332, 687, 318],
        [615, 245, 470, 419], [615, 303, 470, 476], [615, 361, 470, 534], [723, 207, 474, 567], [723, 318, 536, 567],
        [723, 430, 598, 567], [687, 207, 687, 430], [687, 430, 474, 658], [470, 187, 470, 476], [470, 476, 474, 534],
        [615, 361, 615, 476], [470, 419, 536, 534], [470, 476, 598, 534], [615, 419, 598, 567], [474, 600, 598, 600],
        [474, 567, 583, 658], [536, 567, 583, 719], [598, 567, 583, 779], [474, 658, 474, 779], [418, 551, 439, 568],
      ];
      nets.forEach(([a, b, c, d]) => ln(`M${a} ${b}L${c} ${d}`, "#2fa5bd", 1, 0.5));
      ln("M468.500 138v65M436 171.500h65", "#b9c0c8", 1, 0.8);

      document.getElementById("board").innerHTML = `<g transform="translate(-38 -125)">${out.join("")}</g>`;
    </script>
  </body>
</html>
